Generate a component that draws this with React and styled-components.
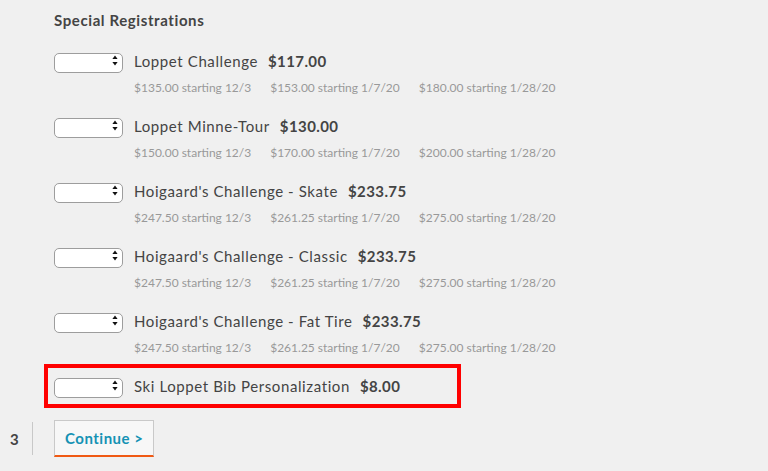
import { createGlobalStyle, styled } from "styled-components";

const GlobalStyle = createGlobalStyle`
  html, body {
    margin: 0;
    background: #f0f0f0;
  }
  body {
    font-family: "Lato", "Liberation Sans", sans-serif;
    color: #444;
  }
`;

const registrations = [
  {
    name: "Loppet Challenge",
    price: "$117.00",
    tiers: ["$135.00 starting 12/3", "$153.00 starting 1/7/20", "$180.00 starting 1/28/20"],
  },
  {
    name: "Loppet Minne-Tour",
    price: "$130.00",
    tiers: ["$150.00 starting 12/3", "$170.00 starting 1/7/20", "$200.00 starting 1/28/20"],
  },
  {
    name: "Hoigaard's Challenge - Skate",
    price: "$233.75",
    tiers: ["$247.50 starting 12/3", "$261.25 starting 1/7/20", "$275.00 starting 1/28/20"],
  },
  {
    name: "Hoigaard's Challenge - Classic",
    price: "$233.75",
    tiers: ["$247.50 starting 12/3", "$261.25 starting 1/7/20", "$275.00 starting 1/28/20"],
  },
  {
    name: "Hoigaard's Challenge - Fat Tire",
    price: "$233.75",
    tiers: ["$247.50 starting 12/3", "$261.25 starting 1/7/20", "$275.00 starting 1/28/20"],
  },
];

const Arrows = () => (
  <svg width="6" height="11" viewBox="0 0 6 11">
    <path d="M3 0.5 L5.6 4 L0.4 4 Z" fill="#111" />
    <path d="M3 10.5 L5.6 7 L0.4 7 Z" fill="#111" />
  </svg>
);

const QtySelect = () => (
  <SelectWrap>
    <NativeSelect defaultValue="">
      <option value=""></option>
      <option value="1">1</option>
      <option value="2">2</option>
    </NativeSelect>
    <ArrowSlot>
      <Arrows />
    </ArrowSlot>
  </SelectWrap>
);

const RowTop = ({ name, price }) => (
  <TopLine>
    <QtySelect />
    <ItemName>{name}</ItemName>
    <ItemPrice>{price}</ItemPrice>
  </TopLine>
);

export default function App() {
  return (
    <Page>
      <GlobalStyle />
      <Section>
        <Heading>Special Registrations</Heading>
        {registrations.map((r) => (
          <Row key={r.name}>
            <RowTop name={r.name} price={r.price} />
            <Tiers>
              {r.tiers.map((t) => (
                <span key={t}>{t}</span>
              ))}
            </Tiers>
          </Row>
        ))}
        <Highlight>
          <RowTop name="Ski Loppet Bib Personalization" price="$8.00" />
        </Highlight>
      </Section>
      <Footer>
        <StepNumber>3</StepNumber>
        <Divider />
        <ContinueButton>Continue &gt;</ContinueButton>
      </Footer>
    </Page>
  );
}

const Page = styled.div`
  padding-top: 10px;
`;

const Section = styled.div`
  margin-left: 54px;
`;

const Heading = styled.h2`
  margin: 0 0 21px;
  font-size: 15px;
  line-height: 20px;
  font-weight: 700;
  letter-spacing: 0.6px;
  color: #444;
`;

const Row = styled.div`
  margin-bottom: 20px;
`;

const TopLine = styled.div`
  display: flex;
  align-items: center;
  height: 20px;
`;

const SelectWrap = styled.div`
  position: relative;
  width: 69px;
  height: 20px;
  flex-shrink: 0;
`;

const NativeSelect = styled.select`
  appearance: none;
  -webkit-appearance: none;
  box-sizing: border-box;
  width: 100%;
  height: 100%;
  margin: 0;
  border: 1px solid #9d9d9d;
  border-radius: 5px;
  background: #fff;
  font-size: 12px;
`;

const ArrowSlot = styled.span`
  position: absolute;
  right: 5px;
  top: 4px;
  display: flex;
  pointer-events: none;
`;

const ItemName = styled.span`
  margin-left: 11px;
  font-size: 15px;
  letter-spacing: 0.6px;
  color: #444;
`;

const ItemPrice = styled.span`
  margin-left: 10px;
  font-size: 15px;
  font-weight: 700;
  letter-spacing: 0.4px;
  color: #444;
`;

const Tiers = styled.div`
  display: flex;
  gap: 19px;
  margin: 9px 0 0 80px;
  font-size: 12px;
  line-height: 16px;
  color: #999;
`;

const Highlight = styled.div`
  width: 417px;
  box-sizing: border-box;
  margin: -12px 0 0 -10px;
  padding: 8px 6px;
  border: 4px solid #ff0000;
`;

const Footer = styled.div`
  display: flex;
  align-items: center;
  margin-top: 12px;
`;

const StepNumber = styled.span`
  width: 32px;
  box-sizing: border-box;
  padding-left: 10px;
  font-size: 15px;
  font-weight: 700;
  color: #444;
`;

const Divider = styled.span`
  width: 1px;
  height: 33px;
  background: #c8c8c8;
`;

const ContinueButton = styled.button`
  box-sizing: border-box;
  width: 100px;
  height: 37px;
  margin-left: 21px;
  padding: 0 0 0 10px;
  text-align: left;
  border: 1px solid #c9c9c9;
  border-bottom: 2px solid #f05a14;
  background: #f7f7f7;
  font-family: inherit;
  font-size: 15px;
  font-weight: 700;
  letter-spacing: 0.5px;
  color: #1592b4;
  cursor: pointer;
`;
